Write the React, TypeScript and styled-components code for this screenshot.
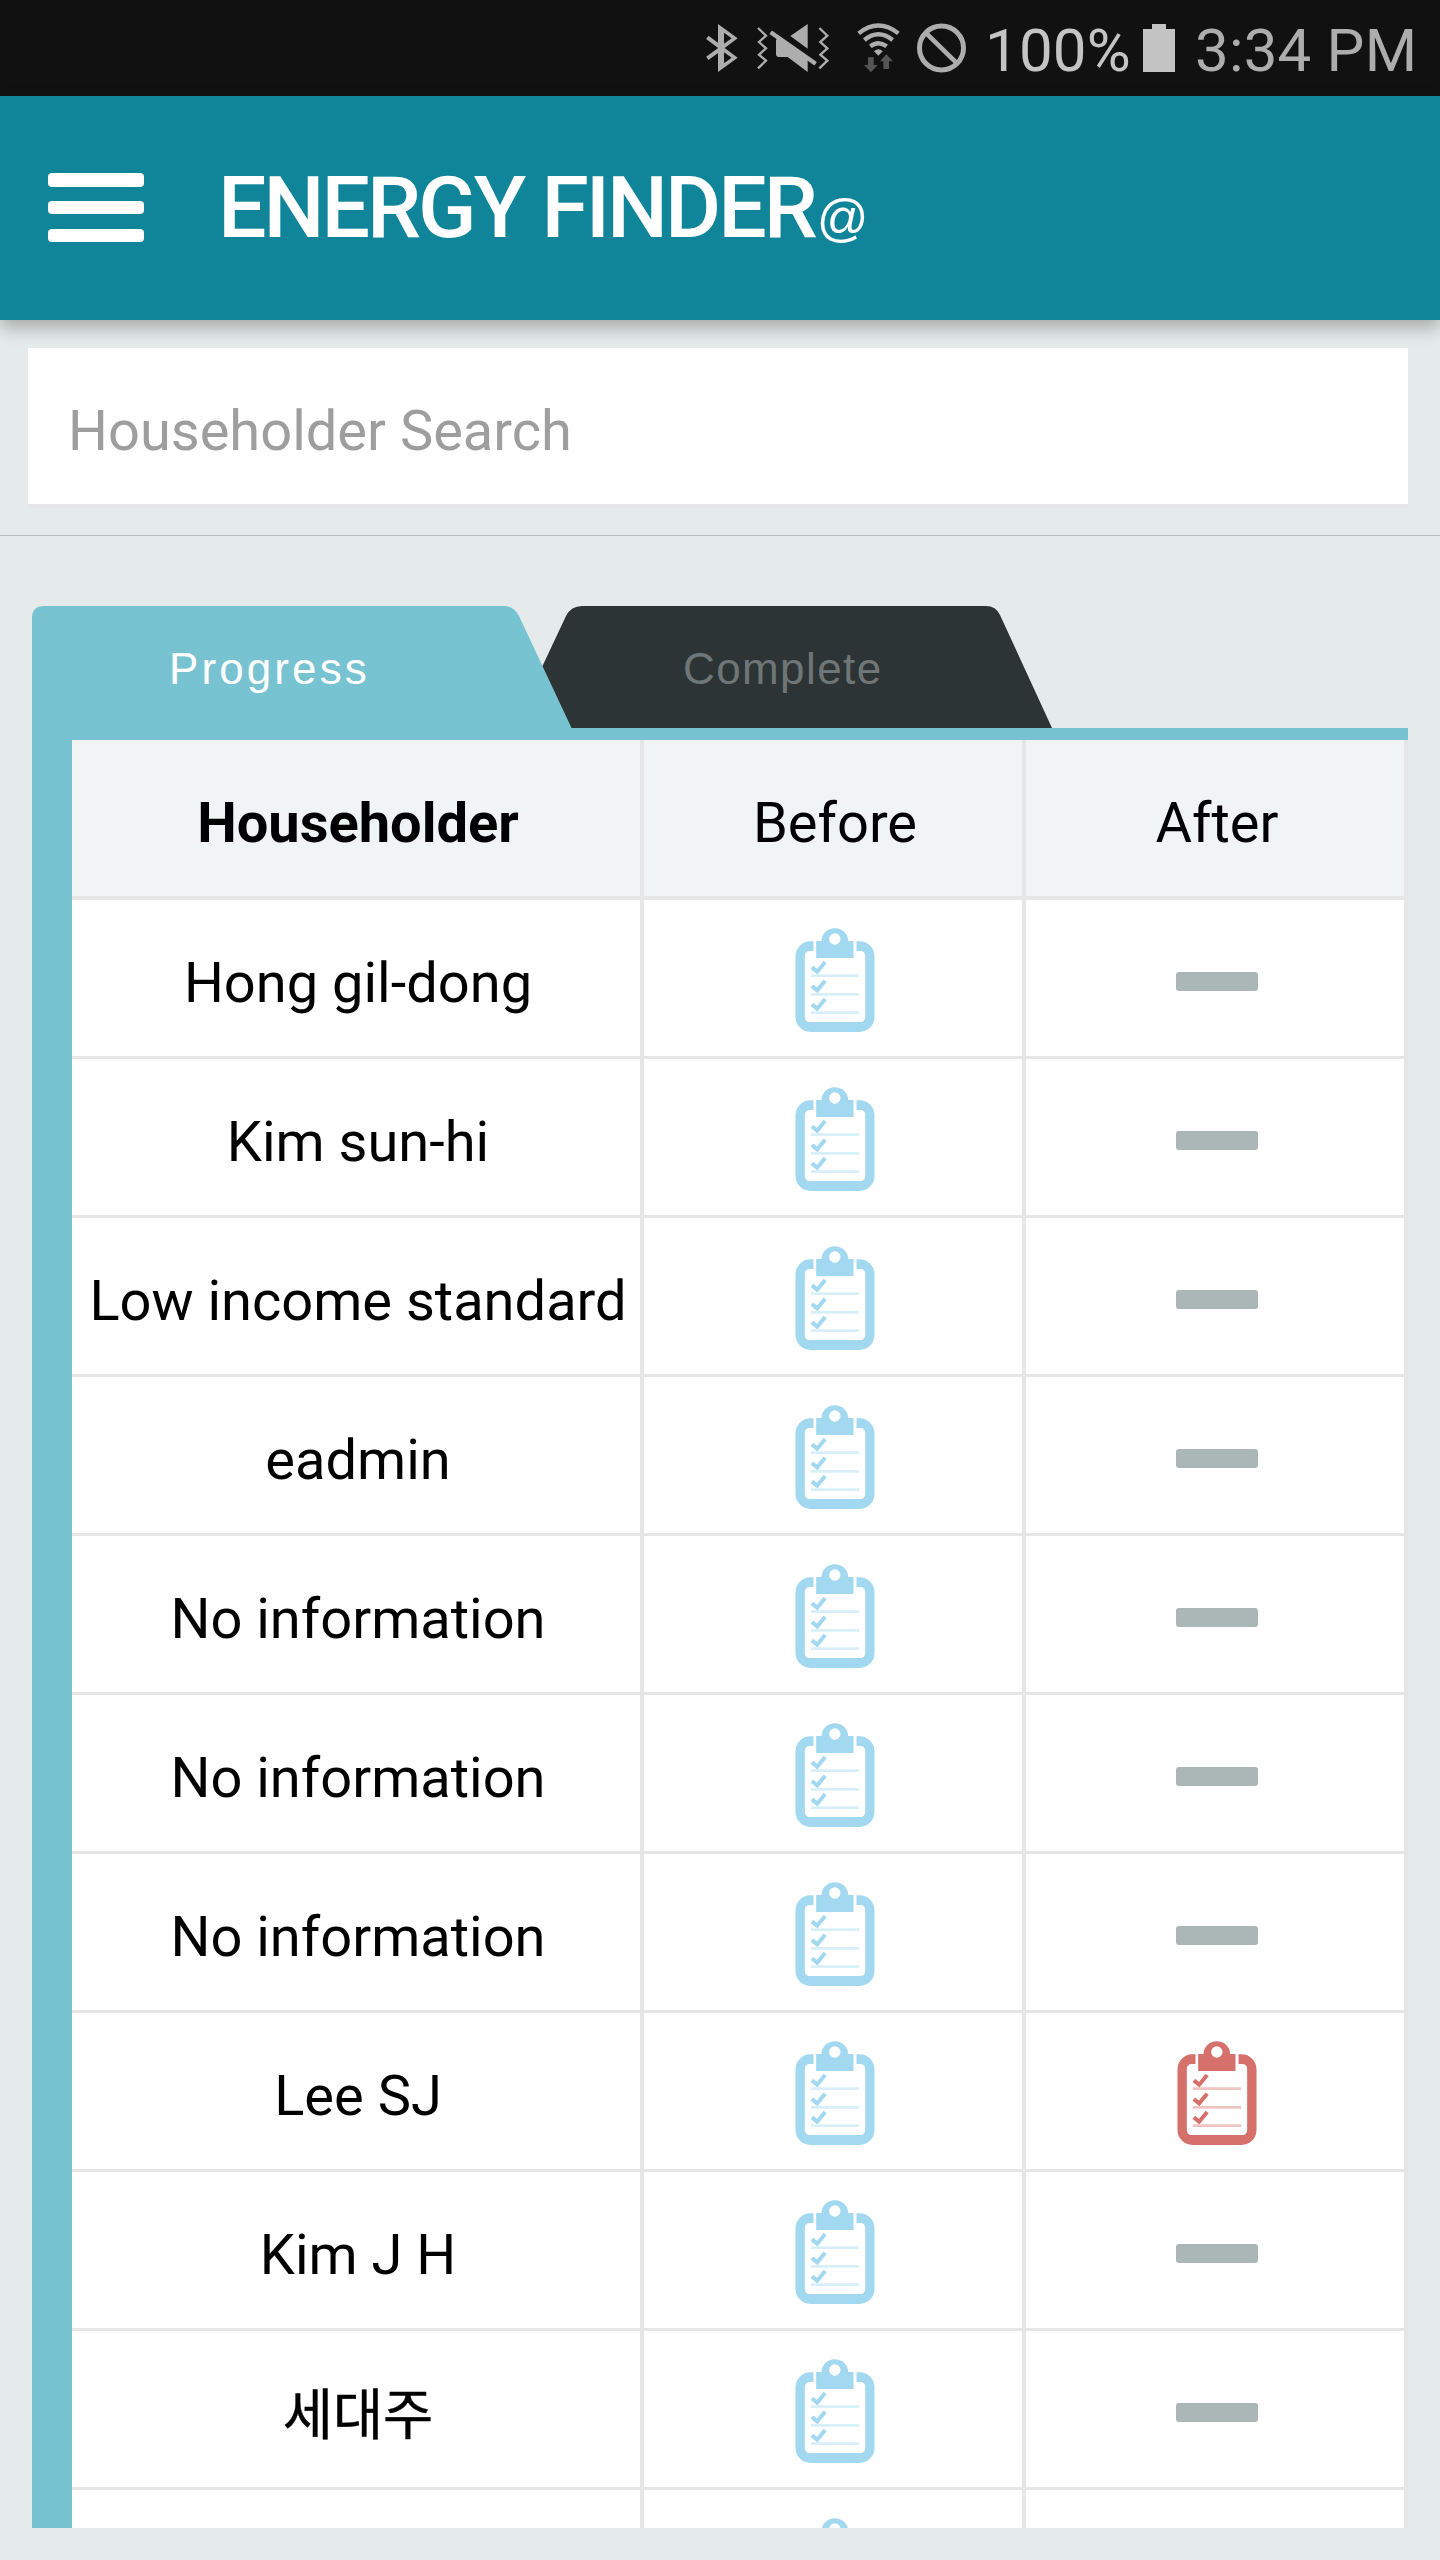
import React from "react";
import styled, { createGlobalStyle } from "styled-components";

const GlobalStyle = createGlobalStyle`
  *, *::before, *::after { box-sizing: border-box; }
  body {
    margin: 0;
    background: #e5ebea;
    font-family: Roboto, "Noto Sans CJK KR", sans-serif;
  }
`;

const Screen = styled.div`
  width: 1440px;
  height: 2560px;
  display: flex;
  flex-direction: column;
  overflow: hidden;
  background: #e5ebea;
`;

const StatusBar = styled.div`
  flex: none;
  height: 96px;
  display: flex;
  align-items: center;
  padding-left: 706px;
  background: #111;
`;

const StatusIcon = styled.svg<{ $w: number; $gap?: number }>`
  flex: none;
  display: block;
  width: ${(p) => p.$w}px;
  height: 96px;
  margin-left: ${(p) => p.$gap ?? 0}px;
`;

const StatusText = styled.span<{ $color: string; $gap: number; $w: number }>`
  flex: none;
  width: ${(p) => p.$w}px;
  margin-left: ${(p) => p.$gap}px;
  padding-top: 5px;
  font-size: 60px;
  line-height: 70px;
  letter-spacing: 0.2px;
  white-space: nowrap;
  color: ${(p) => p.$color};
`;

const Header = styled.header`
  flex: none;
  height: 224px;
  display: flex;
  align-items: center;
  padding-left: 48px;
  background: #108499;
  box-shadow: 0 8px 16px rgba(0, 0, 0, 0.27);
`;

const MenuButton = styled.button`
  width: 96px;
  height: 69px;
  display: flex;
  flex-direction: column;
  justify-content: space-between;
  margin-bottom: 1px;
  padding: 0;
  border: 0;
  background: none;
`;

const MenuBar = styled.span`
  height: 13.5px;
  border-radius: 4px;
  background: #fff;
`;

const Title = styled.h1`
  display: flex;
  align-items: baseline;
  margin: 0 0 0 74px;
  font-size: 86px;
  line-height: 100px;
  font-weight: 500;
  letter-spacing: -3.05px;
  white-space: nowrap;
  color: #fff;
`;

const AtSign = styled.span`
  margin-left: 2px;
  padding-bottom: 10px;
  align-self: flex-end;
  font-family: "Liberation Sans", sans-serif;
  font-size: 51px;
  line-height: 58px;
  font-weight: 400;
  letter-spacing: 0;
`;

const SearchArea = styled.div`
  flex: none;
  height: 216px;
  padding: 28px 32px 0 28px;
  border-bottom: 1px solid #b9bfbf;
`;

const SearchInput = styled.input`
  display: block;
  width: 100%;
  height: 160px;
  padding: 10px 40px 0;
  border: 0;
  border-bottom: 4px solid #e6e6e6;
  border-radius: 0;
  outline: 0;
  background: #fff;
  font: 400 56px/66px Roboto, sans-serif;
  &::placeholder { color: #9e9e9e; opacity: 1; }
`;

const Tabs = styled.div`
  flex: none;
  height: 122px;
  display: flex;
  margin: 70px 32px 0;
`;

const Tab = styled.div<{ $w: number; $overlap?: number; $front?: boolean }>`
  position: relative;
  z-index: ${(p) => (p.$front ? 1 : 0)};
  width: ${(p) => p.$w}px;
  height: 122px;
  margin-left: ${(p) => -(p.$overlap ?? 0)}px;
`;

const TabShape = styled.svg`
  display: block;
  width: 100%;
  height: 100%;
`;

const TabLabel = styled.span<{ $left: number; $color: string; $spacing: number }>`
  position: absolute;
  left: ${(p) => p.$left}px;
  top: 38px;
  font: 400 44px/50px "Liberation Sans", sans-serif;
  letter-spacing: ${(p) => p.$spacing}px;
  white-space: nowrap;
  color: ${(p) => p.$color};
`;

const Panel = styled.div`
  flex: none;
  height: 1800px;
  margin: 0 32px;
  border-top: 12px solid #78c3d1;
  border-left: 40px solid #78c3d1;
  background: #fff;
  overflow: hidden;
`;

const Row = styled.div<{ $head?: boolean }>`
  display: grid;
  grid-template-columns: 572px 382px 382px;
  height: ${(p) => (p.$head ? 160 : 159)}px;
  border-bottom: ${(p) => (p.$head ? 4 : 3)}px solid #e6e6e6;
  background: ${(p) => (p.$head ? "#f1f4f5" : "#fff")};
`;

const Cell = styled.div`
  display: flex;
  align-items: center;
  justify-content: center;
  padding-top: 4px;
  box-shadow: inset -4px 0 #e6e6e6;
`;

const TextCell = styled(Cell)<{ $bold?: boolean }>`
  padding-top: 10px;
  font-size: 56px;
  line-height: 66px;
  font-weight: ${(p) => (p.$bold ? 700 : 400)};
  white-space: nowrap;
  color: #000;

  &:lang(ko) {
    padding-top: 4px;
    font-family: "Noto Sans CJK KR", sans-serif;
    font-size: 54.5px;
    -webkit-text-stroke: 0.5px #000;
  }
`;

const Dash = styled.span`
  width: 82px;
  height: 19px;
  margin-top: 3px;
  border-radius: 3px;
  background: #abb7b7;
`;

const ClipIcon = styled.svg`
  display: block;
  width: 80px;
  height: 104px;
`;

function Clipboard({ color, rule }: { color: string; rule: string }) {
  return (
    <ClipIcon viewBox="75.5 53 240 312">
      <path
        fill={color}
        d="M131 93H122A45 45 0 0 0 77 138V320A45 45 0 0 0 122 365H269A45 45 0 0 0 314 320V138A45 45 0 0 0 269 93H260V122H272A14 14 0 0 1 286 136V321A14 14 0 0 1 272 335H119A14 14 0 0 1 105 321V136A14 14 0 0 1 119 122H131Z"
      />
      <path
        fill={color}
        fillRule="evenodd"
        d="M139 92H155A40 38 0 0 1 235 92H251V143H139ZM195 69A17 17 0 1 0 195 103A17 17 0 1 0 195 69Z"
      />
      {[0, 56, 111].map((dy) => (
        <g key={dy} transform={`translate(0 ${dy})`}>
          <path d="M123 196H268" stroke={rule} strokeWidth="8" />
          <path d="M126 171L142 184L166 155" fill="none" stroke={color} strokeWidth="12" />
        </g>
      ))}
    </ClipIcon>
  );
}

const rows: { name: string; lang?: string; done?: boolean }[] = [
  { name: "Hong gil-dong" },
  { name: "Kim sun-hi" },
  { name: "Low income standard" },
  { name: "eadmin" },
  { name: "No information" },
  { name: "No information" },
  { name: "No information" },
  { name: "Lee SJ", done: true },
  { name: "Kim J H" },
  { name: "세대주", lang: "ko" },
  { name: "" },
];

const GREY = "#adadad";

export default function App() {
  return (
    <Screen>
      <GlobalStyle />
      <StatusBar>
        <StatusIcon $w={32} viewBox="48 0 96 288">
          <path
            fill={GREY}
            fillRule="evenodd"
            d="M84 72L143 115L104 144L143 173L84 216ZM102 98V131L125 115ZM102 157V190L125 173Z"
          />
          <path d="M52 112L92 142M52 175L92 146" stroke={GREY} strokeWidth="12" />
        </StatusIcon>
        <StatusIcon $w={72} $gap={19} viewBox="201 0 216 288">
          <g fill="none" stroke={GREY} strokeWidth="7">
            <path d="M204 84L228 107L207 126L228 145L207 164L228 182L204 205" />
            <path d="M388 84L412 107L391 126L412 145L391 164L412 182L388 205" />
          </g>
          <path fill={GREY} d="M301 108L353 72V146Z" />
          <path fill={GREY} d="M258 120L266 110L353 172V216L293 171H266Q258 170 258 162Z" />
          <path d="M242 97L377 191" stroke={GREY} strokeWidth="13" />
        </StatusIcon>
        <StatusIcon $w={44} $gap={27} viewBox="498 0 132 288">
          <g fill="none" stroke={GREY} strokeWidth="13">
            <path d="M506 100Q565 53 625 100" />
            <path d="M523 120Q565 86 608 120" />
            <path d="M541 139Q565 120 590 139" />
          </g>
          <path fill={GREY} d="M552 154Q565 141 578 154L565 167Z" />
          <path fill="#555" d="M534 172H551V195H563L543 217L522 195H534ZM589 163L609 184H597V207H580V184H570Z" />
        </StatusIcon>
        <StatusIcon $w={50} $gap={17} viewBox="681 0 150 288">
          <circle cx="754.5" cy="144" r="66" fill="none" stroke={GREY} strokeWidth="15" />
          <path d="M706 97L801 190" stroke={GREY} strokeWidth="14" />
        </StatusIcon>
        <StatusText $color="#c4c4c4" $gap={18} $w={148}>100%</StatusText>
        <StatusIcon $w={32} $gap={10} viewBox="0 0 32 96">
          <path fill="#c4c4c4" d="M0 29H9V24H23V29H32V72H0Z" />
        </StatusIcon>
        <StatusText $color={GREY} $gap={20} $w={225}>3:34 PM</StatusText>
      </StatusBar>
      <Header>
        <MenuButton aria-label="Menu">
          <MenuBar />
          <MenuBar />
          <MenuBar />
        </MenuButton>
        <Title>
          ENERGY FINDER<AtSign>@</AtSign>
        </Title>
      </Header>
      <SearchArea>
        <SearchInput placeholder="Householder Search" />
      </SearchArea>
      <Tabs>
        <Tab $w={540} $front>
          <TabShape viewBox="0 0 540 122">
            <path fill="#78c3d1" d="M0 122V12Q0 0 12 0H472Q482 0 487 10L539.5 122Z" />
          </TabShape>
          <TabLabel $left={137} $color="#fff" $spacing={3.1}>Progress</TabLabel>
        </Tab>
        <Tab $w={515} $overlap={35}>
          <TabShape viewBox="0 0 515 122">
            <path fill="#2d3436" d="M5 61L29 10Q34 0 45 0H449Q459 0 463 9L515 122H34Z" />
          </TabShape>
          <TabLabel $left={146} $color="#6f7678" $spacing={1.4}>Complete</TabLabel>
        </Tab>
      </Tabs>
      <Panel>
        <Row $head>
          <TextCell $bold>Householder</TextCell>
          <TextCell>Before</TextCell>
          <TextCell>After</TextCell>
        </Row>
        {rows.map((row, i) => (
          <Row key={i}>
            <TextCell lang={row.lang}>{row.name}</TextCell>
            <Cell>
              <Clipboard color="#a3d9f0" rule="#d8eff9" />
            </Cell>
            <Cell>
              {row.done ? <Clipboard color="#d6706b" rule="#efc4c1" /> : <Dash />}
            </Cell>
          </Row>
        ))}
      </Panel>
    </Screen>
  );
}
